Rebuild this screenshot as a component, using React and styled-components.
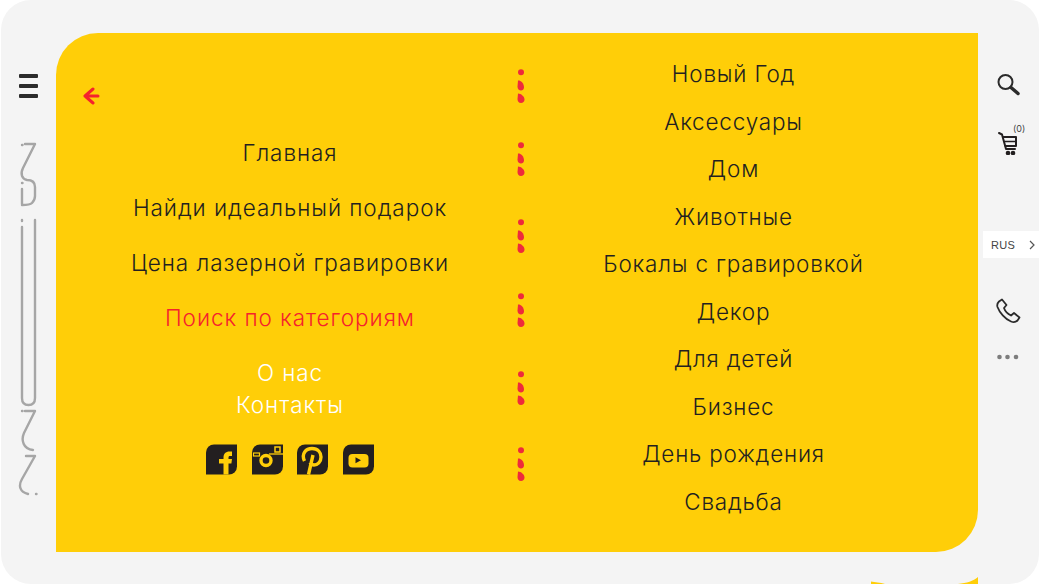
import React from 'react'
import styled, { createGlobalStyle } from 'styled-components'

const Globalstyle = createGlobalStyle`
*{
  margin: 0;
  padding: 0;
  box-sizing: border-box;
}
body{
  background: #fff;
  font-family: Inter, "Open Sans", "Liberation Sans", sans-serif;
}
`
const Frame = styled.div`
  position: relative;
  width: 1038px;
  height: 584px;
  margin-left: 1px;
  display: flex;
  background: #f4f4f4;
  border-radius: 30px;
  overflow: hidden;
`
const LeftRail = styled.div`
  width: 55px;
  display: flex;
  flex-direction: column;
  padding: 74px 0 0 18px;
`
const Burger = styled.div`
  width: 19px;
  display: flex;
  flex-direction: column;
  gap: 6.5px;
  margin-bottom: 41px;
`
const BurgerBar = styled.span`
  height: 3.5px;
  background: #2b2b2b;
  border-radius: 1px;
`
const ScrollArt = styled.svg`
  display: block;
  margin-left: -1px;
`
const Yellow = styled.div`
  width: 922px;
  height: 519px;
  margin-top: 33px;
  background: #ffce08;
  border-radius: 42px 0 42px 0;
  display: grid;
  grid-template-columns: 459px 12px 1fr;
`
const LeftCol = styled.div`
  position: relative;
  padding: 108px 0 0 9px;
  display: flex;
  flex-direction: column;
  align-items: center;
`
const Back = styled.svg`
  position: absolute;
  left: 26px;
  top: 54px;
`
const MenuItem = styled.a`
  font-size: 22.5px;
  font-weight: 300;
  letter-spacing: 0.95px;
  line-height: 24px;
  height: ${p => p.$h}px;
  color: ${p => p.$color || '#231f20'};
  white-space: nowrap;
`
const Socials = styled.div`
  display: flex;
  gap: 14.7px;
  margin-top: 19px;
`
const Dots = styled.div`
  padding-top: 36px;
  display: flex;
  flex-direction: column;
  align-items: center;
`
const DotGroup = styled.svg`
  display: block;
  margin-bottom: ${p => p.$gap}px;
`
const RightCol = styled.div`
  padding: 28px 38px 0 0;
  display: flex;
  flex-direction: column;
  align-items: center;
`
const CatItem = styled.a`
  font-size: 22.5px;
  font-weight: 300;
  letter-spacing: 0.8px;
  height: 47.55px;
  line-height: 26px;
  color: #231f20;
  white-space: nowrap;
`
const RightRail = styled.div`
  flex: 1;
  display: flex;
  flex-direction: column;
  align-items: flex-start;
  padding: 72px 0 0 0;
`
const RailIcon = styled.svg`
  display: block;
  margin-left: ${p => p.$ml}px;
  margin-bottom: ${p => p.$mb}px;
`
const CartWrap = styled.div`
  position: relative;
  margin-left: 20px;
  margin-bottom: 76px;
`
const CartCount = styled.span`
  position: absolute;
  left: 15px;
  top: -7px;
  font-size: 9px;
  line-height: 10px;
  color: #444;
`
const CartIcon = styled.svg`
  display: block;
`
const Lang = styled.div`
  width: 56px;
  height: 27px;
  margin-left: 5px;
  margin-bottom: 40px;
  padding: 0 3px 0 8px;
  background: #fff;
  display: flex;
  align-items: center;
  justify-content: space-between;
  font-family: "Liberation Sans", sans-serif;
  font-size: 11px;
  letter-spacing: 0.3px;
  color: #444;
`
const Peek = styled.svg`
  position: absolute;
  left: 0;
  top: 0;
  pointer-events: none;
`

const INK = '#231f20'
const RED = '#ee2a3c'
const YEL = '#ffce08'
const SHELL = 'M8 0H31V22a8 8 0 0 1-8 8H0V8a8 8 0 0 1 8-8z'

const Scroll = () => (
  <ScrollArt width="22" height="360" viewBox="18 138 22 360" fill="none" stroke="#a6a6a6" strokeWidth="2.400" strokeLinecap="round" strokeLinejoin="round">
    <path d="M22 144h.5M25 143h10L23 167c-3 6-1 11 4 12 5 0 8 2 8 7v9c0 3-1 5-3 7-2 2-5 2-10 2" />
    <path d="M22 182h.5M22 188v15M22 219v1" />
    <path d="M22 226v171c0 5 3 7 6.500 7s6.500-2 6.500-7V219" />
    <path d="M22 410h.5M25 410h10L24 432c-3 7-1 16 9 17" />
    <path d="M26 455h9L22 478c-4 7-2 13 6 15M36 493h.5" />
  </ScrollArt>
)

const Facebook = () => (
  <svg width="31" height="31" viewBox="0 0 31 30">
    <path d={SHELL} fill={INK} />
    <path d="M17.500 30V19H13v-4.500h4.500V13c0-3.800 2.200-6 6-6H26v4.500h-2c-1.200 0-1.500.6-1.500 1.700v1.300H26l-.6 4.500h-2.900v11z" fill={YEL} />
  </svg>
)
const Instagram = () => (
  <svg width="31" height="31" viewBox="0 0 31 30">
    <path d={SHELL} fill={INK} />
    <path d="M17 9.500H31" stroke={YEL} strokeWidth="1.300" />
    <circle cx="14" cy="16" r="5" fill={INK} stroke={YEL} strokeWidth="3.400" />
    <rect x="1.500" y="8.500" width="6" height="3" fill={INK} stroke={YEL} strokeWidth="1.200" />
    <rect x="23" y="2.500" width="5" height="5" fill={INK} stroke={YEL} strokeWidth="1.500" />
  </svg>
)
const Pinterest = () => (
  <svg width="31" height="31" viewBox="0 0 31 30">
    <path d={SHELL} fill={INK} />
    <path d="M7.500 16.500C4 9 9 4 15 4c6 0 9 4 9 8.500 0 5-3.500 8-7 8-2 0-3-1-4-2.500M16 10.500L11.500 30" fill="none" stroke={YEL} strokeWidth="3.400" />
  </svg>
)
const Youtube = () => (
  <svg width="31" height="31" viewBox="0 0 31 30">
    <path d={SHELL} fill={INK} />
    <rect x="5.500" y="9.500" width="20" height="13.500" rx="4" fill={YEL} />
    <path d="M12.500 12.700l5.500 3-5.500 3z" fill={INK} />
  </svg>
)

const menu = [
  { t: 'Главная', h: 55 },
  { t: 'Найди идеальный подарок', h: 55 },
  { t: 'Цена лазерной гравировки', h: 55 },
  { t: 'Поиск по категориям', h: 55, color: '#f5222d' },
  { t: 'О нас', h: 32, color: '#fff' },
  { t: 'Контакты', h: 32, color: '#fff' },
]
const cats = ['Новый Год', 'Аксессуары', 'Дом', 'Животные', 'Бокалы с гравировкой', 'Декор', 'Для детей', 'Бизнес', 'День рождения', 'Свадьба']
const gaps = [39, 43, 40, 44, 42, 0]

export default function App() {
  return (
    <Frame>
      <Globalstyle />
      <LeftRail>
        <Burger>
          <BurgerBar />
          <BurgerBar />
          <BurgerBar />
        </Burger>
        <Scroll />
      </LeftRail>
      <Yellow>
        <LeftCol>
          <Back width="18" height="18" viewBox="0 0 18 18" fill="none" stroke="#f5222d" strokeWidth="3" strokeLinecap="round" strokeLinejoin="round">
            <path d="M11 2L3 9l8 7M3 9h13" />
          </Back>
          {menu.map(m => (
            <MenuItem key={m.t} $h={m.h} $color={m.color}>{m.t}</MenuItem>
          ))}
          <Socials>
            <Facebook />
            <Instagram />
            <Pinterest />
            <Youtube />
          </Socials>
        </LeftCol>
        <Dots>
          {gaps.map((g, i) => (
            <DotGroup key={i} $gap={g} width="8" height="34" viewBox="0 0 8 34" fill={RED}>
              <circle cx="4" cy="3.200" r="3" />
              <path d="M1 11.500c2-.5 6 2 6 7 0 2-1.500 3-3 3-2 0-3.500-1.500-3.500-4z" />
              <path d="M1 24.500c3 0 6.500 3 6.500 6 0 2-1.500 3.500-3.500 3.500-2.500 0-3.500-2-3.500-4z" />
            </DotGroup>
          ))}
        </Dots>
        <RightCol>
          {cats.map(c => (
            <CatItem key={c}>{c}</CatItem>
          ))}
        </RightCol>
      </Yellow>
      <RightRail>
        <RailIcon $ml={18} $mb={35} width="24" height="24" viewBox="0 0 24 24" fill="none" stroke="#2b2b2b">
          <circle cx="9.500" cy="10" r="7" strokeWidth="2" />
          <path d="M15 15.500l7 6" strokeWidth="3.500" strokeLinecap="round" />
        </RailIcon>
        <CartWrap>
          <CartIcon width="20" height="24" viewBox="0 0 20 24" fill="none" stroke={INK} strokeWidth="2" strokeLinejoin="round" strokeLinecap="round">
            <path d="M1 2l3 1.500L8 18h9" />
            <path d="M5 6h13v9H7.500" />
            <path d="M6.500 10.500H18" strokeWidth="1.300" />
            <circle cx="10" cy="22" r="1.300" fill={INK} />
            <circle cx="15" cy="22" r="1.300" fill={INK} />
          </CartIcon>
          <CartCount>(0)</CartCount>
        </CartWrap>
        <Lang>
          RUS
          <svg width="8" height="10" viewBox="0 0 8 10" fill="none" stroke="#555" strokeWidth="1.200">
            <path d="M2 1l4 4-4 4" />
          </svg>
        </Lang>
        <RailIcon $ml={18} $mb={30} width="26" height="26" viewBox="0 0 26 26" fill="none" stroke="#2b2b2b" strokeWidth="1.800" strokeLinejoin="round">
          <path d="M3 3.500l3-2 4.500 5.500-2.500 3c1 3 4 6 7 7.500l3-2.500 5.500 4.500-2 3c-1.500 1.500-4 2-6.500 1C9 21 3.500 14.500 1.500 9c-.7-2.200 0-4 1.500-5.500z" />
        </RailIcon>
        <RailIcon $ml={18} $mb={0} width="24" height="6" viewBox="0 0 24 6" fill="#7d7d7d">
          <circle cx="3.500" cy="3" r="2.300" />
          <circle cx="11.500" cy="3" r="2.300" />
          <circle cx="20" cy="3" r="2.300" />
        </RailIcon>
      </RightRail>
      <Peek width="1038" height="584" viewBox="1 0 1038 584" fill={YEL}>
        <path d="M871 581.500c4 .5 9 1 14 2.500h-14zM958 584c9-1 15-3 20-7v7z" />
      </Peek>
    </Frame>
  )
}
